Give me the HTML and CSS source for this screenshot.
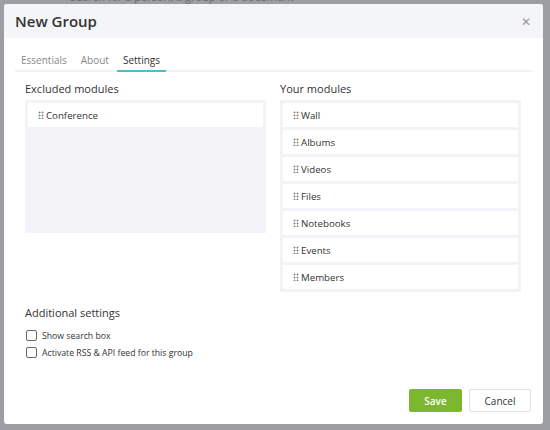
FILE: index.html
```html
<!DOCTYPE html>
<html>
<head>
<meta charset="utf-8">
<link rel="stylesheet" href="styles.css">
</head>
<body>
<div class="backdrop">
  <div class="search">Search for a person, a group or a document</div>
</div>
<div class="modal">
  <div class="header">
    <h1 class="title">New Group</h1>
    <span class="close">&#x2715;</span>
  </div>
  <div class="tabs">
    <span class="tab">Essentials</span>
    <span class="tab">About</span>
    <span class="tab active">Settings</span>
  </div>
  <div class="content">
    <div class="columns">
      <div class="col">
        <div class="label">Excluded modules</div>
        <div class="box box-left">
          <div class="item"><span class="grip"></span>Conference</div>
        </div>
      </div>
      <div class="col">
        <div class="label">Your modules</div>
        <div class="box">
          <div class="item"><span class="grip"></span>Wall</div>
          <div class="item"><span class="grip"></span>Albums</div>
          <div class="item"><span class="grip"></span>Videos</div>
          <div class="item"><span class="grip"></span>Files</div>
          <div class="item"><span class="grip"></span>Notebooks</div>
          <div class="item"><span class="grip"></span>Events</div>
          <div class="item"><span class="grip"></span>Members</div>
        </div>
      </div>
    </div>
    <div class="additional">
      <div class="label">Additional settings</div>
      <label class="check"><span class="cb"></span>Show search box</label>
      <label class="check"><span class="cb"></span>Activate RSS &amp; API feed for this group</label>
    </div>
  </div>
  <div class="footer">
    <button class="btn save">Save</button>
    <button class="btn cancel">Cancel</button>
  </div>
</div>
</body>
</html>
```
FILE: styles.css
```css
* { box-sizing: border-box; }
html, body { margin: 0; padding: 0; }
body {
  width: 550px;
  height: 430px;
  background: #9c9ea4;
  font-family: "Open Sans", "Liberation Sans", sans-serif;
  color: #333;
  overflow: hidden;
  position: relative;
}
.backdrop { height: 430px; }
.search {
  padding: 0 0 0 70px;
  margin-top: -10px;
  font-size: 11px;
  line-height: 14px;
  color: #6a6c72;
}
.modal {
  position: absolute;
  top: 4px;
  left: 4px;
  width: 539px;
  height: 420px;
  background: #fff;
  border-radius: 3px;
  display: flex;
  flex-direction: column;
}
.header {
  height: 34px;
  background: #f4f5f8;
  border-radius: 3px 3px 0 0;
  display: flex;
  align-items: center;
  justify-content: space-between;
  padding: 0 12px 0 11px;
}
.title {
  margin: 0;
  font-size: 15px;
  font-weight: 600;
  color: #333;
}
.close {
  font-size: 12px;
  color: #999;
}
.tabs {
  margin: 12px 11px 0;
  height: 22px;
  border-bottom: 2px solid #f1f2f4;
  display: flex;
  gap: 14px;
  padding-left: 6px;
}
.tab {
  font-size: 10px;
  color: #888;
  line-height: 20px;
  position: relative;
}
.tab.active {
  color: #333;
}
.tab.active::after {
  content: "";
  position: absolute;
  left: -6px;
  right: -6px;
  bottom: -2px;
  height: 2px;
  background: #4cc0c8;
}
.content {
  padding: 8px 22px 0 21px;
  flex: 1;
}
.columns {
  display: flex;
  gap: 14px;
}
.col { width: 241px; }
.label {
  font-size: 11px;
  color: #333;
  line-height: 18px;
  margin-bottom: 2px;
}
.box {
  background: #f3f3f7;
  padding: 3px 3px 0;
  display: flex;
  flex-direction: column;
}
.box-left { height: 133px; }
.item {
  background: #fff;
  height: 24px;
  margin-bottom: 3px;
  font-size: 9.7px;
  color: #333;
  display: flex;
  align-items: center;
  padding-left: 10px;
}
.grip {
  width: 6px;
  height: 8px;
  margin-right: 2px;
  background-image: radial-gradient(circle, #8a8a8a 0.9px, transparent 1.1px);
  background-size: 3px 3px;
  background-position: 0 0;
}
.additional {
  margin-top: 12px;
}
.additional .label { margin-bottom: 5px; }
.check {
  display: flex;
  align-items: center;
  font-size: 8.7px;
  color: #333;
  height: 17px;
  padding-left: 1px;
}
.cb {
  width: 11px;
  height: 11px;
  border: 1px solid #666;
  border-radius: 2px;
  margin-right: 5px;
}
.footer {
  display: flex;
  justify-content: flex-end;
  gap: 7px;
  padding: 0 12px 12px 0;
}
.btn {
  font-family: "Open Sans", "Liberation Sans", sans-serif;
  font-size: 10px;
  height: 23px;
  border-radius: 2px;
  cursor: pointer;
}
.save {
  width: 53px;
  background: #7cb82f;
  border: none;
  color: #fff;
  font-weight: 600;
}
.cancel {
  width: 62px;
  background: #fff;
  border: 1px solid #e3e3e6;
  color: #333;
}
```
